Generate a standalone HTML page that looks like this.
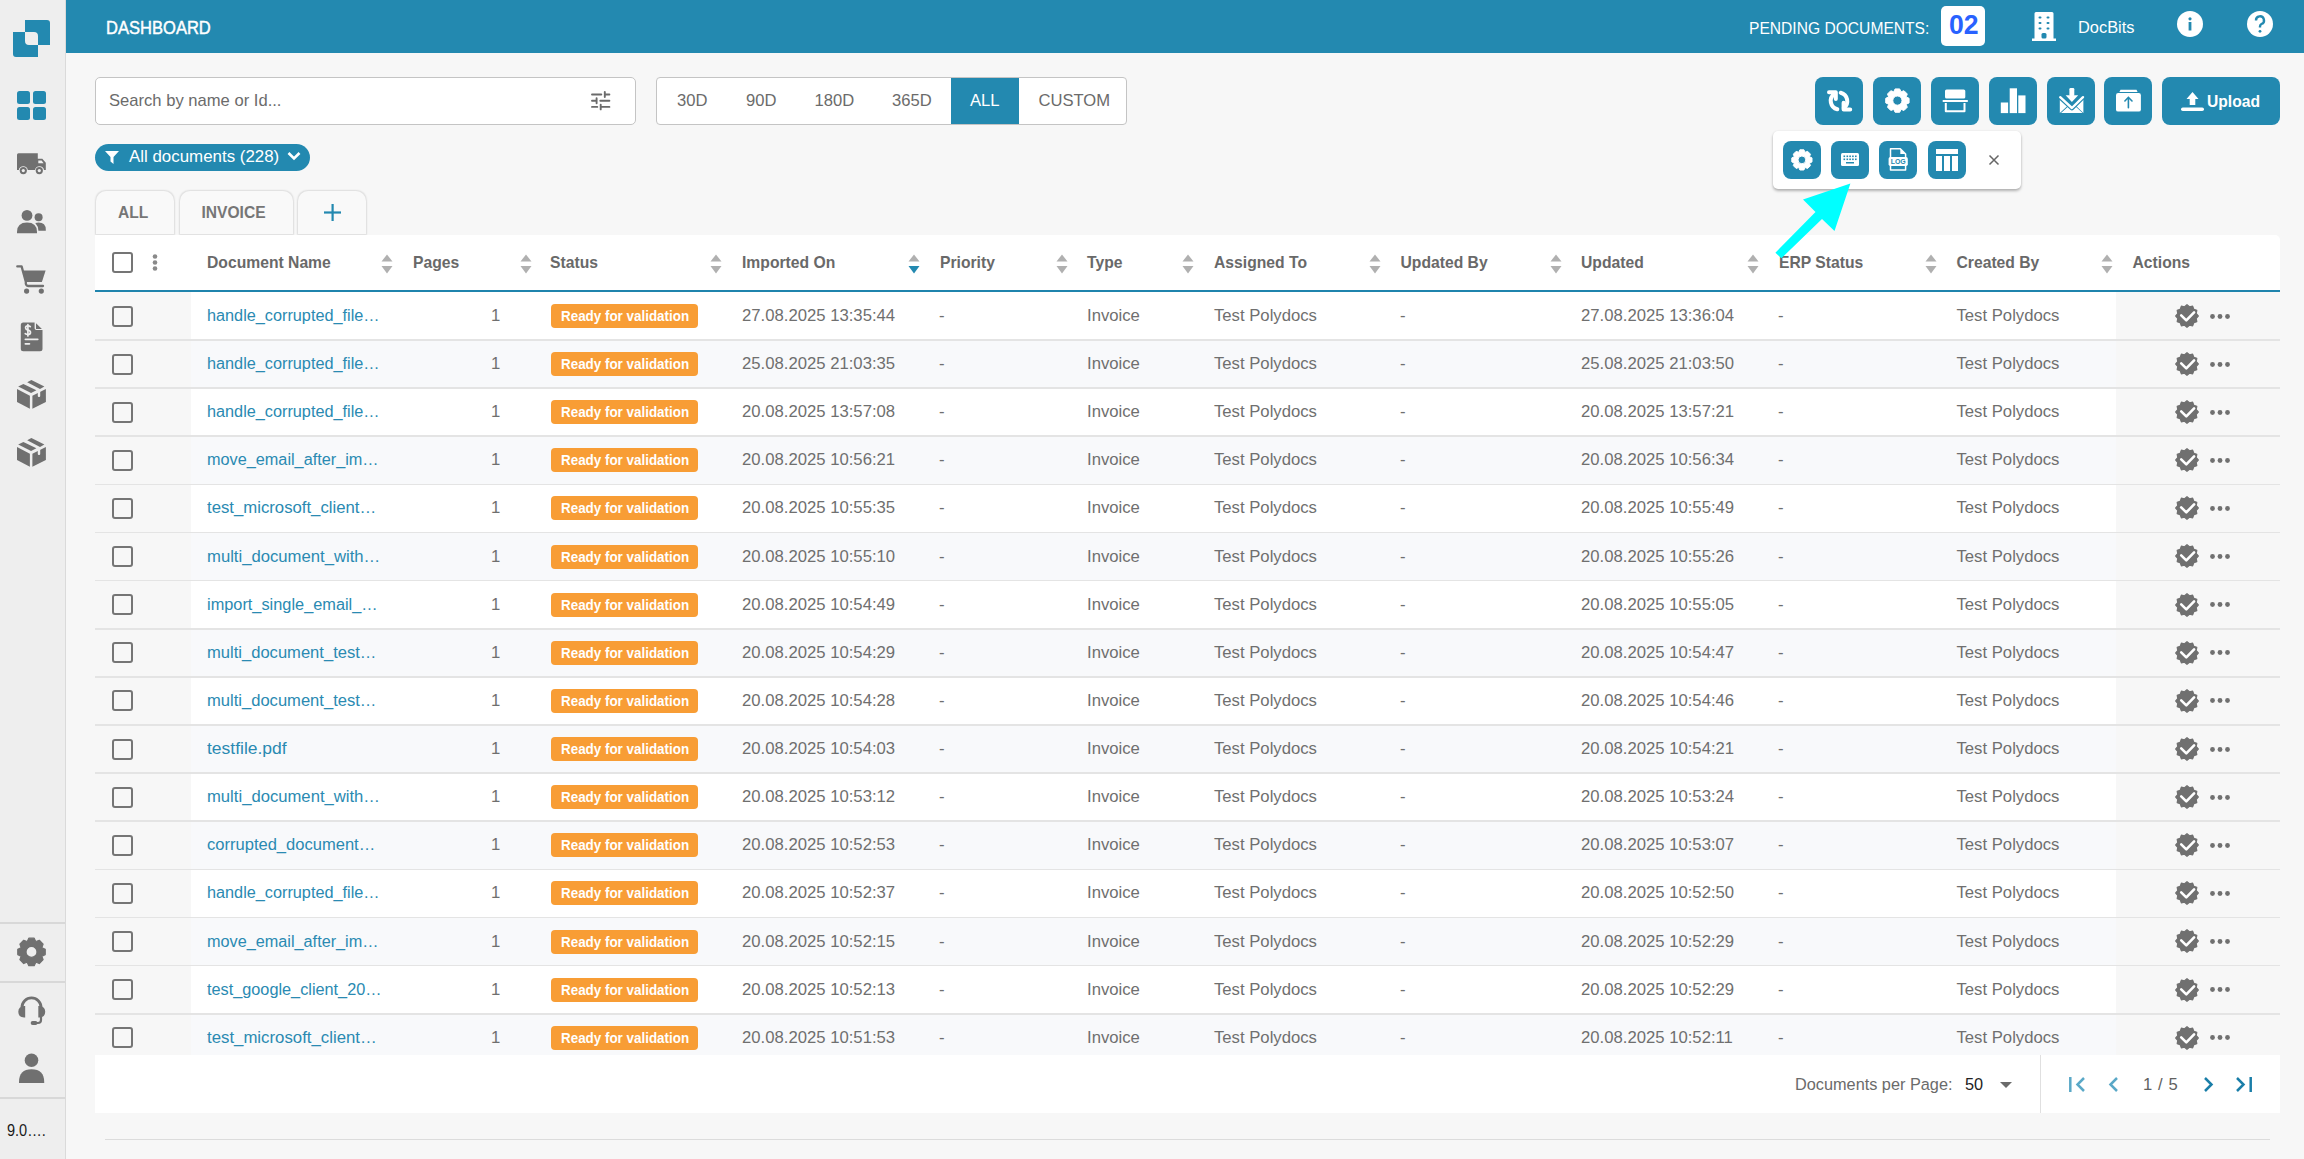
<!DOCTYPE html><html><head><meta charset="utf-8"><style>
*{box-sizing:border-box;margin:0;padding:0}
html,body{width:2304px;height:1159px;overflow:hidden;background:#f7f7f7;font-family:"Liberation Sans",sans-serif;color:#6f6f6f}
.a{position:absolute;white-space:nowrap}
.ic{position:absolute;display:block;overflow:visible}
#side{position:absolute;left:0;top:0;width:66px;height:1159px;background:#eeeeee;border-right:1px solid #dadada}
#hdr{position:absolute;left:66px;top:0;width:2238px;height:53px;background:#2389b0}
.btn{position:absolute;background:#2389b0;border-radius:8px}
.card{position:absolute;left:95px;top:235px;width:2185px;height:878px;background:#fff;border-radius:0 5px 0 0}
.th{position:absolute;top:249px;height:28px;line-height:28px;font-weight:bold;font-size:15.7px;color:#696969}

.cell{position:absolute;top:0;height:47px;line-height:47px;font-size:16.7px;color:#6f6f6f}
.cb{position:absolute;width:21px;height:21px;border:2px solid #757575;border-radius:3px;background:transparent}
</style></head><body>
<div id="side"></div>
<svg class="ic" style="left:12px;top:19px;width:40px;height:40px" viewBox="0 0 40 40"><path fill-rule="evenodd" fill="#2389b0" d="M13 1 H35 Q38 1 38 4 V26 H17 Q13 26 13 22 Z M1 13 H22 Q26 13 26 17 V38 H4 Q1 38 1 35 Z"/></svg>
<svg class="ic" style="left:17px;top:91px;width:29px;height:29px" viewBox="0 0 29 29"><g fill="#2389b0"><rect x="0" y="0" width="13" height="13" rx="2.5"/><rect x="16" y="0" width="13" height="13" rx="2.5"/><rect x="0" y="16" width="13" height="13" rx="2.5"/><rect x="16" y="16" width="13" height="13" rx="2.5"/></g></svg>
<svg class="ic" style="left:0;top:145px;width:66px;height:35px" viewBox="0 145 66 35"><path fill="#707070" d="M18.5 153.3 H37.8 V158.7 H42.3 L45.8 162.8 V169.9 H44 A4.6 4.6 0 0 0 35 169.9 H27.8 A4.6 4.6 0 0 0 18.8 169.9 H17 V154.8 Q17 153.3 18.5 153.3Z"/><path fill="#eee" d="M38.3 160.6 H41.6 L43.6 163.3 H38.3Z"/><circle cx="23.3" cy="170.6" r="3.6" fill="#707070"/><circle cx="23.3" cy="170.6" r="1.6" fill="#eee"/><circle cx="39.3" cy="170.6" r="3.6" fill="#707070"/><circle cx="39.3" cy="170.6" r="1.6" fill="#eee"/></svg>
<svg class="ic" style="left:0;top:205px;width:66px;height:35px" viewBox="0 205 66 35"><g fill="#707070"><circle cx="27" cy="215.4" r="5.4"/><path d="M17 232 Q17 222.5 27 222.5 Q37 222.5 37 232 V233.2 H17Z"/><circle cx="38.6" cy="217.2" r="4"/><path d="M35.3 222.9 Q36.8 222.6 38.6 222.6 Q45.8 222.6 45.8 229.8 V230.8 H38.4 Q38.3 226 35.3 222.9Z"/></g></svg>
<svg class="ic" style="left:0;top:260px;width:66px;height:40px" viewBox="0 260 66 40"><g fill="#707070"><path d="M23.3 270.4 H45.6 L41.9 282 H25.6Z"/><circle cx="26.6" cy="291.1" r="2.6"/><circle cx="41.3" cy="291.1" r="2.6"/></g><path d="M17.3 266.4 H21.6 L25.8 281.8 Q25.4 285.9 28.5 286 H43" stroke="#707070" stroke-width="2.3" fill="none" stroke-linecap="round" stroke-linejoin="round"/></svg>
<svg class="ic" style="left:0;top:318px;width:66px;height:38px" viewBox="0 318 66 38"><path fill="#707070" d="M23.3 322.6 H34.6 V328.2 Q34.6 330 36.4 330 H42.5 V348.7 Q42.5 351.2 40 351.2 H23.3 Q20.8 351.2 20.8 348.7 V325.1 Q20.8 322.6 23.3 322.6Z"/><path fill="#707070" d="M36 323.3 L41.9 329 H36Z"/><g stroke="#eee" fill="none" stroke-width="1.7" stroke-linecap="round"><path d="M30.3 326.6 Q29.5 325.8 27.9 325.8 Q25.4 325.8 25.6 327.9 Q25.8 329.7 28 330.1 Q30.6 330.6 30.5 332.6 Q30.3 334.5 27.9 334.5 Q26.2 334.5 25.3 333.6"/><path d="M27.9 324.7 V335.9"/></g><g fill="#eee"><rect x="24.5" y="338.4" width="14.1" height="1.8" rx="0.9"/><rect x="24.5" y="342.9" width="5.8" height="1.8" rx="0.9"/></g></svg>
<svg class="ic" style="left:0;top:370px;width:66px;height:45px" viewBox="0 370 66 45"><g fill="#707070"><path d="M17 389.1 L29.9 395.8 V408.8 L17 402.1Z"/><path d="M32.4 395.8 L45.9 389.1 V402.1 L32.4 408.8Z"/><path d="M18.2 386.6 L23.4 383.9 L36.4 390.2 L31.1 392.9Z"/><path d="M27.2 382.2 L31.4 380.1 L44.4 386.5 L40 388.9Z"/></g><rect x="37.8" y="389.8" width="2.4" height="7.3" rx="1" fill="#eee"/></svg>
<svg class="ic" style="left:0;top:427.7px;width:66px;height:45px" viewBox="0 370 66 45"><g fill="#707070"><path d="M17 389.1 L29.9 395.8 V408.8 L17 402.1Z"/><path d="M32.4 395.8 L45.9 389.1 V402.1 L32.4 408.8Z"/><path d="M18.2 386.6 L23.4 383.9 L36.4 390.2 L31.1 392.9Z"/><path d="M27.2 382.2 L31.4 380.1 L44.4 386.5 L40 388.9Z"/></g><rect x="37.8" y="389.8" width="2.4" height="7.3" rx="1" fill="#eee"/></svg>
<div class="a" style="left:0;top:922px;width:65px;height:1.5px;background:#d8d8d8"></div>
<div class="a" style="left:0;top:981px;width:65px;height:1.5px;background:#d8d8d8"></div>
<div class="a" style="left:0;top:1097px;width:65px;height:1.5px;background:#d8d8d8"></div>
<svg class="ic" style="left:0;top:0;width:66px;height:1159px" viewBox="0 0 66 1159"><path fill-rule="evenodd" fill="#707070" stroke="#707070" stroke-width="1.2" stroke-linejoin="round" d="M27.30 941.41 L28.80 938.16 L34.20 938.16 L35.70 941.41 L35.95 941.51 L39.30 940.28 L43.12 944.10 L41.89 947.45 L41.99 947.70 L45.24 949.20 L45.24 954.60 L41.99 956.10 L41.89 956.35 L43.12 959.70 L39.30 963.52 L35.95 962.29 L35.70 962.39 L34.20 965.64 L28.80 965.64 L27.30 962.39 L27.05 962.29 L23.70 963.52 L19.88 959.70 L21.11 956.35 L21.01 956.10 L17.76 954.60 L17.76 949.20 L21.01 947.70 L21.11 947.45 L19.88 944.10 L23.70 940.28 L27.05 941.51Z M37.00 951.90 A5.5 5.5 0 1 0 26.00 951.90 A5.5 5.5 0 1 0 37.00 951.90Z"/></svg>
<svg class="ic" style="left:0;top:990px;width:66px;height:40px" viewBox="0 990 66 40"><path d="M21.9 1007.5 A9.6 9.6 0 0 1 41.1 1007.5" stroke="#707070" stroke-width="2.8" fill="none"/><g fill="#707070"><path d="M25.2 1005.9 V1017.6 H24 Q18.3 1017 18.3 1011.7 Q18.3 1006.4 24 1005.9Z"/><path d="M38.3 1005.9 V1017.6 H39.5 Q45.2 1017 45.2 1011.7 Q45.2 1006.4 39.5 1005.9Z"/><rect x="30.7" y="1021" width="6.8" height="3.9" rx="1.95"/></g><path d="M41 1016 V1020 Q41 1023 38 1023 H35" stroke="#707070" stroke-width="2.2" fill="none"/></svg>
<svg class="ic" style="left:0;top:1050px;width:66px;height:40px" viewBox="0 1050 66 40"><g fill="#707070"><circle cx="31.5" cy="1060.3" r="6.8"/><path d="M19 1082 Q19 1069.3 31.5 1069.3 Q44.2 1069.3 44.2 1082 V1083.1 H19Z"/></g></svg>
<div class="a" style="left:7px;top:1120px;font-size:16.5px;line-height:20px;color:#1a1a1a;transform:scaleX(0.88);transform-origin:0 0">9.0….</div>
<div id="hdr"></div>
<div class="a" style="left:105.5px;top:16px;font-size:18.6px;line-height:24px;color:#fff;font-weight:normal;-webkit-text-stroke:0.45px #fff;transform:scaleX(0.89);transform-origin:0 0">DASHBOARD</div>
<div class="a" style="left:1749px;top:17px;font-size:16.8px;line-height:24px;color:#fff;transform:scaleX(0.93);transform-origin:0 0">PENDING DOCUMENTS:</div>
<div class="a" style="left:1941px;top:6px;width:44px;height:40px;background:#fff;border-radius:5px"></div>
<div class="a" style="left:1949px;top:5px;height:40px;line-height:40px;font-size:27.5px;font-weight:bold;color:#2962ff;transform:scaleX(0.966);transform-origin:0 0">02</div>
<svg class="ic" style="left:2032px;top:12px;width:24px;height:29px" viewBox="0 0 24 29"><path fill="#fff" d="M4 0 H20 Q21.5 0 21.5 1.5 V26.5 H24 V29 H0 V26.5 H2.5 V1.5 Q2.5 0 4 0Z"/><g fill="#2389b0"><rect x="6.5" y="4.5" width="3" height="2" rx="1"/><rect x="14.5" y="4.5" width="3" height="2" rx="1"/><rect x="6.5" y="10" width="3" height="2" rx="1"/><rect x="14.5" y="10" width="3" height="2" rx="1"/><rect x="6.5" y="15.5" width="3" height="2" rx="1"/><rect x="14.5" y="15.5" width="3" height="2" rx="1"/><rect x="9.5" y="21" width="5" height="5.5" rx="1.5"/></g></svg>
<div class="a" style="left:2078px;top:15px;font-size:16.4px;line-height:24px;color:#fff">DocBits</div>
<svg class="ic" style="left:2177px;top:11px;width:26px;height:26px" viewBox="0 0 26 26"><circle cx="13" cy="13" r="13" fill="#fff"/><circle cx="13" cy="7.8" r="1.6" fill="#2389b0"/><rect x="11.6" y="11" width="2.8" height="8.5" fill="#2389b0"/></svg>
<svg class="ic" style="left:2246.5px;top:11px;width:26px;height:26px" viewBox="0 0 26 26"><circle cx="13" cy="13" r="13" fill="#fff"/><path d="M9 9.5 A4 4 0 1 1 14.5 13 Q13 13.8 13 15.5 V16.5" stroke="#2389b0" stroke-width="2.4" fill="none"/><circle cx="13" cy="20.3" r="1.4" fill="#2389b0"/></svg>
<div class="a" style="left:95px;top:77px;width:541px;height:48px;background:#fff;border:1.5px solid #c4c4c4;border-radius:5px"></div>
<div class="a" style="left:109px;top:89px;font-size:16.6px;line-height:24px;color:#6b6b6b">Search by name or Id...</div>
<svg class="ic" style="left:580px;top:80px;width:40px;height:40px" viewBox="580 80 40 40"><path d="M592 94.5 H601.3 M604.8 92 V97 M604.8 94.5 H609.4 M592 100.7 H596.6 M596.6 98.3 V103.2 M600.3 100.7 H609.4 M592 106.9 H597.3 M600.7 104.6 V109.4 M600.7 106.9 H609.4" stroke="#6b6b6b" stroke-width="1.9" stroke-linecap="round" fill="none"/></svg>
<div class="a" style="left:656px;top:77px;width:471px;height:48px;background:#fff;border:1.5px solid #c4c4c4;border-radius:4px"></div>
<div class="a" style="left:951px;top:78px;width:68px;height:46px;background:#2389b0"></div>
<div class="a" style="left:677px;top:89px;font-size:16.6px;line-height:24px;color:#6b6b6b">30D</div>
<div class="a" style="left:746px;top:89px;font-size:16.6px;line-height:24px;color:#6b6b6b">90D</div>
<div class="a" style="left:814.5px;top:89px;font-size:16.6px;line-height:24px;color:#6b6b6b">180D</div>
<div class="a" style="left:892px;top:89px;font-size:16.6px;line-height:24px;color:#6b6b6b">365D</div>
<div class="a" style="left:970px;top:89px;font-size:16.6px;line-height:24px;color:#fff">ALL</div>
<div class="a" style="left:1038.5px;top:89px;font-size:16.6px;line-height:24px;color:#6b6b6b">CUSTOM</div>
<div class="a" style="left:95px;top:144px;width:215px;height:27px;background:#2389b0;border-radius:14px"></div>
<svg class="ic" style="left:105px;top:151px;width:14px;height:13px" viewBox="0 0 14 13"><path fill="#fff" d="M0 0 H14 L8.5 6 V13 L5.5 10.5 V6Z"/></svg>
<div class="a" style="left:129px;top:145px;font-size:16.9px;line-height:24px;color:#fff">All documents (228)</div>
<svg class="ic" style="left:287px;top:151px;width:14px;height:10px" viewBox="0 0 14 10"><path d="M1.5 2 L7 7.5 L12.5 2" stroke="#fff" stroke-width="2.6" fill="none"/></svg>
<div class="a" style="left:96px;top:190.5px;width:78px;height:43.5px;background:#f9f9f9;border-radius:10px 10px 0 0;box-shadow:0 0 1.5px 0.5px rgba(0,0,0,0.10)"></div>
<div class="a" style="left:180px;top:190.5px;width:113px;height:43.5px;background:#f9f9f9;border-radius:10px 10px 0 0;box-shadow:0 0 1.5px 0.5px rgba(0,0,0,0.10)"></div>
<div class="a" style="left:298px;top:190.5px;width:68px;height:43.5px;background:#f9f9f9;border-radius:10px 10px 0 0;box-shadow:0 0 1.5px 0.5px rgba(0,0,0,0.10)"></div>
<div class="a" style="left:118px;top:201px;font-size:15.6px;line-height:24px;font-weight:bold;color:#767676">ALL</div>
<div class="a" style="left:201.5px;top:201px;font-size:15.6px;line-height:24px;font-weight:bold;color:#767676">INVOICE</div>
<svg class="ic" style="left:324px;top:204px;width:17px;height:17px" viewBox="0 0 17 17"><g fill="#2389b0"><rect x="7.5" y="0" width="2.2" height="17"/><rect x="0" y="7.4" width="17" height="2.2"/></g></svg>
<div class="btn" style="left:1815px;top:77px;width:48px;height:48px"></div>
<div class="btn" style="left:1873px;top:77px;width:48px;height:48px"></div>
<div class="btn" style="left:1931px;top:77px;width:48px;height:48px"></div>
<div class="btn" style="left:1989px;top:77px;width:48px;height:48px"></div>
<div class="btn" style="left:2046.5px;top:77px;width:48px;height:48px"></div>
<div class="btn" style="left:2104px;top:77px;width:48px;height:48px"></div>
<div class="btn" style="left:2162px;top:77px;width:118px;height:48px"></div>
<svg class="ic" style="left:1815px;top:77px;width:48px;height:48px" viewBox="0 0 48 48"><g stroke="#fff" stroke-width="4" fill="none" stroke-linecap="round" stroke-linejoin="round"><path d="M14 15.2 H20.8 V22"/><path d="M19.2 16.8 A8.8 8.8 0 0 0 22.3 32.3"/><path d="M28.6 25.8 V32.6 H35.2"/><path d="M28.8 31.2 A8.8 8.8 0 0 0 25.7 15.7"/></g></svg>
<svg class="ic" style="left:1873px;top:77px;width:48px;height:48px" viewBox="0 0 48 48"><path fill-rule="evenodd" fill="#fff" stroke="#fff" stroke-width="1" stroke-linejoin="round" d="M20.80 14.70 L22.10 11.92 L26.70 11.92 L28.00 14.70 L28.15 14.76 L31.03 13.72 L34.28 16.97 L33.24 19.85 L33.30 20.00 L36.08 21.30 L36.08 25.90 L33.30 27.20 L33.24 27.35 L34.28 30.23 L31.03 33.48 L28.15 32.44 L28.00 32.50 L26.70 35.28 L22.10 35.28 L20.80 32.50 L20.65 32.44 L17.77 33.48 L14.52 30.23 L15.56 27.35 L15.50 27.20 L12.72 25.90 L12.72 21.30 L15.50 20.00 L15.56 19.85 L14.52 16.97 L17.77 13.72 L20.65 14.76Z M29.00 23.60 A4.6 4.6 0 1 0 19.80 23.60 A4.6 4.6 0 1 0 29.00 23.60Z"/></svg>
<svg class="ic" style="left:1931px;top:77px;width:48px;height:48px" viewBox="0 0 48 48"><g fill="#fff"><rect x="14" y="12.4" width="20.3" height="9.2" rx="1.6"/><rect x="11.7" y="23" width="25.1" height="2"/></g><path d="M14.8 26 V34.2 H33.5 V26" stroke="#fff" stroke-width="2" fill="none" stroke-linejoin="round"/></svg>
<svg class="ic" style="left:1989px;top:77px;width:48px;height:48px" viewBox="0 0 48 48"><g fill="#fff"><rect x="11.8" y="25.5" width="7.3" height="10.6"/><rect x="20.7" y="11.3" width="7.3" height="24.8"/><rect x="29.3" y="18.4" width="7.2" height="17.7"/></g></svg>
<svg class="ic" style="left:2046.5px;top:77px;width:48px;height:48px" viewBox="0 0 48 48"><g fill="#fff"><rect x="22.4" y="11" width="4.9" height="8" rx="1.2"/><path d="M18.6 18.2 H31.2 L24.9 25Z"/><path d="M12.8 21 L21 28.6 L12.8 36Z"/><path d="M36.4 21 L28.6 28.6 L36.4 36Z"/><path d="M14 36 L21.5 29.2 Q24.9 32.6 28.3 29.2 L35.6 36Z"/></g><path d="M13.2 20.2 L24.9 31 L36 20.2" stroke="#2389b0" stroke-width="4.6" fill="none" stroke-linejoin="round"/><path d="M13.2 20.2 L24.9 31 L36 20.2" stroke="#fff" stroke-width="2.4" fill="none" stroke-linejoin="round" stroke-linecap="round"/></svg>
<svg class="ic" style="left:2104px;top:77px;width:48px;height:48px" viewBox="0 0 48 48"><g fill="#fff"><path d="M16.5 12.8 H32.5 L33.6 14.9 H15.4Z"/><rect x="12" y="16.1" width="24.9" height="18.5" rx="2.2"/></g><path d="M24.4 30.8 V20.3 M20.9 24 L24.4 20.3 L28 24" stroke="#2389b0" stroke-width="1.6" fill="none" stroke-linecap="round"/></svg>
<svg class="ic" style="left:2181px;top:92px;width:23px;height:20px" viewBox="0 0 23 20"><g fill="#fff"><path d="M11.5 0 L17.5 7 H14.3 V13 H8.7 V7 H5.5Z"/><rect x="0" y="15.5" width="23" height="3.5" rx="1.75"/></g></svg>
<div class="a" style="left:2207px;top:89.5px;font-size:17px;line-height:24px;font-weight:bold;color:#fff;transform:scaleX(0.92);transform-origin:0 0">Upload</div>
<div class="card"></div>
<div class="cb" style="left:112px;top:252px"></div>
<svg class="ic" style="left:152px;top:254px;width:6px;height:17px" viewBox="0 0 6 17"><g fill="#8a8a8a"><circle cx="3" cy="2.5" r="2.3"/><circle cx="3" cy="8.5" r="2.3"/><circle cx="3" cy="14.5" r="2.3"/></g></svg>
<div class="th" style="left:207px">Document Name</div>
<svg class="ic" style="left:381px;top:254px;width:12px;height:20px" viewBox="0 0 12 20"><path fill="#b0b0b0" d="M0.5 7.5 L6 0.5 L11.5 7.5Z"/><path fill="#b0b0b0" d="M0.5 12 L6 19.5 L11.5 12Z"/></svg>
<div class="th" style="left:413px">Pages</div>
<svg class="ic" style="left:520px;top:254px;width:12px;height:20px" viewBox="0 0 12 20"><path fill="#b0b0b0" d="M0.5 7.5 L6 0.5 L11.5 7.5Z"/><path fill="#b0b0b0" d="M0.5 12 L6 19.5 L11.5 12Z"/></svg>
<div class="th" style="left:550px">Status</div>
<svg class="ic" style="left:710px;top:254px;width:12px;height:20px" viewBox="0 0 12 20"><path fill="#b0b0b0" d="M0.5 7.5 L6 0.5 L11.5 7.5Z"/><path fill="#b0b0b0" d="M0.5 12 L6 19.5 L11.5 12Z"/></svg>
<div class="th" style="left:742px">Imported On</div>
<svg class="ic" style="left:908px;top:254px;width:12px;height:20px" viewBox="0 0 12 20"><path fill="#b0b0b0" d="M0.5 7.5 L6 0.5 L11.5 7.5Z"/><path fill="#2389b0" d="M0.5 12 L6 19.5 L11.5 12Z"/></svg>
<div class="th" style="left:940px">Priority</div>
<svg class="ic" style="left:1055.5px;top:254px;width:12px;height:20px" viewBox="0 0 12 20"><path fill="#b0b0b0" d="M0.5 7.5 L6 0.5 L11.5 7.5Z"/><path fill="#b0b0b0" d="M0.5 12 L6 19.5 L11.5 12Z"/></svg>
<div class="th" style="left:1087px">Type</div>
<svg class="ic" style="left:1182px;top:254px;width:12px;height:20px" viewBox="0 0 12 20"><path fill="#b0b0b0" d="M0.5 7.5 L6 0.5 L11.5 7.5Z"/><path fill="#b0b0b0" d="M0.5 12 L6 19.5 L11.5 12Z"/></svg>
<div class="th" style="left:1214px">Assigned To</div>
<svg class="ic" style="left:1369px;top:254px;width:12px;height:20px" viewBox="0 0 12 20"><path fill="#b0b0b0" d="M0.5 7.5 L6 0.5 L11.5 7.5Z"/><path fill="#b0b0b0" d="M0.5 12 L6 19.5 L11.5 12Z"/></svg>
<div class="th" style="left:1400.5px">Updated By</div>
<svg class="ic" style="left:1549.5px;top:254px;width:12px;height:20px" viewBox="0 0 12 20"><path fill="#b0b0b0" d="M0.5 7.5 L6 0.5 L11.5 7.5Z"/><path fill="#b0b0b0" d="M0.5 12 L6 19.5 L11.5 12Z"/></svg>
<div class="th" style="left:1581px">Updated</div>
<svg class="ic" style="left:1747px;top:254px;width:12px;height:20px" viewBox="0 0 12 20"><path fill="#b0b0b0" d="M0.5 7.5 L6 0.5 L11.5 7.5Z"/><path fill="#b0b0b0" d="M0.5 12 L6 19.5 L11.5 12Z"/></svg>
<div class="th" style="left:1779px">ERP Status</div>
<svg class="ic" style="left:1925px;top:254px;width:12px;height:20px" viewBox="0 0 12 20"><path fill="#b0b0b0" d="M0.5 7.5 L6 0.5 L11.5 7.5Z"/><path fill="#b0b0b0" d="M0.5 12 L6 19.5 L11.5 12Z"/></svg>
<div class="th" style="left:1956.5px">Created By</div>
<svg class="ic" style="left:2101px;top:254px;width:12px;height:20px" viewBox="0 0 12 20"><path fill="#b0b0b0" d="M0.5 7.5 L6 0.5 L11.5 7.5Z"/><path fill="#b0b0b0" d="M0.5 12 L6 19.5 L11.5 12Z"/></svg>
<div class="th" style="left:2132.5px">Actions</div>
<div class="a" style="left:95px;top:290px;width:2185px;height:2.3px;background:#1f84ad"></div>
<div class="a" style="left:95px;top:292px;width:2185px;height:763px;overflow:hidden">
<div style="position:absolute;left:0;top:0.00px;width:2185px;height:48.12px;background:#ffffff">
<div style="position:absolute;left:0;top:0;width:96px;height:100%;background:#f7f7f7"></div>
<div style="position:absolute;left:2021px;top:0;width:164px;height:100%;background:#f7f7f7"></div>
<div class="cb" style="left:17px;top:13.5px"></div>
<div class="cell a" style="left:111.5px;color:#2a8ab2;font-size:16.0px;transform:scaleX(1.0155);transform-origin:0 0">handle_corrupted_file…</div>
<div class="cell a" style="left:396px;color:#6f6f6f;font-size:16.7px;">1</div>
<div class="a" style="left:456px;top:12px;width:147px;height:24px;background:#f89d35;border-radius:4px"></div><div class="a" style="left:465.5px;top:12px;height:24px;color:#fff;font-weight:bold;font-size:14.9px;line-height:24.5px;transform:scaleX(0.9);transform-origin:0 0">Ready for validation</div>
<div class="cell a" style="left:647px;color:#6f6f6f;font-size:16.7px;">27.08.2025 13:35:44</div>
<div class="cell a" style="left:844px;color:#6f6f6f;font-size:16.7px;">-</div>
<div class="cell a" style="left:992px;color:#6f6f6f;font-size:16.7px;">Invoice</div>
<div class="cell a" style="left:1119px;color:#6f6f6f;font-size:16.7px;">Test Polydocs</div>
<div class="cell a" style="left:1305px;color:#6f6f6f;font-size:16.7px;">-</div>
<div class="cell a" style="left:1486px;color:#6f6f6f;font-size:16.7px;">27.08.2025 13:36:04</div>
<div class="cell a" style="left:1683px;color:#6f6f6f;font-size:16.7px;">-</div>
<div class="cell a" style="left:1861.5px;color:#6f6f6f;font-size:16.7px;">Test Polydocs</div>
<svg class="ic" style="left:2080px;top:11.9px;width:24px;height:24px" viewBox="0 0 24 24"><g fill="#707070"><path stroke="#707070" stroke-width="1.2" stroke-linejoin="round" d="M12.00 0.70 L14.48 2.73 L17.65 2.21 L18.79 5.21 L21.79 6.35 L21.27 9.52 L23.30 12.00 L21.27 14.48 L21.79 17.65 L18.79 18.79 L17.65 21.79 L14.48 21.27 L12.00 23.30 L9.52 21.27 L6.35 21.79 L5.21 18.79 L2.21 17.65 L2.73 14.48 L0.70 12.00 L2.73 9.52 L2.21 6.35 L5.21 5.21 L6.35 2.21 L9.52 2.73Z"/><path d="M6.2 11.4 L11.3 16.4 L19.1 8.4" stroke="#fff" stroke-width="2.6" fill="none" stroke-linecap="round" stroke-linejoin="round"/></g></svg>
<svg class="ic" style="left:2115px;top:21.5px;width:20px;height:5px" viewBox="0 0 20 5"><g fill="#707070"><circle cx="2.5" cy="2.5" r="2.4"/><circle cx="10" cy="2.5" r="2.4"/><circle cx="17.5" cy="2.5" r="2.4"/></g></svg>
<div style="position:absolute;left:0;top:47.2px;width:2185px;height:1.7px;background:#e4e4e4;z-index:1"></div>
</div>
<div style="position:absolute;left:0;top:48.12px;width:2185px;height:48.12px;background:#f8f9fb">
<div style="position:absolute;left:0;top:0;width:96px;height:100%;background:#f7f7f7"></div>
<div style="position:absolute;left:2021px;top:0;width:164px;height:100%;background:#f7f7f7"></div>
<div class="cb" style="left:17px;top:13.5px"></div>
<div class="cell a" style="left:111.5px;color:#2a8ab2;font-size:16.0px;transform:scaleX(1.0155);transform-origin:0 0">handle_corrupted_file…</div>
<div class="cell a" style="left:396px;color:#6f6f6f;font-size:16.7px;">1</div>
<div class="a" style="left:456px;top:12px;width:147px;height:24px;background:#f89d35;border-radius:4px"></div><div class="a" style="left:465.5px;top:12px;height:24px;color:#fff;font-weight:bold;font-size:14.9px;line-height:24.5px;transform:scaleX(0.9);transform-origin:0 0">Ready for validation</div>
<div class="cell a" style="left:647px;color:#6f6f6f;font-size:16.7px;">25.08.2025 21:03:35</div>
<div class="cell a" style="left:844px;color:#6f6f6f;font-size:16.7px;">-</div>
<div class="cell a" style="left:992px;color:#6f6f6f;font-size:16.7px;">Invoice</div>
<div class="cell a" style="left:1119px;color:#6f6f6f;font-size:16.7px;">Test Polydocs</div>
<div class="cell a" style="left:1305px;color:#6f6f6f;font-size:16.7px;">-</div>
<div class="cell a" style="left:1486px;color:#6f6f6f;font-size:16.7px;">25.08.2025 21:03:50</div>
<div class="cell a" style="left:1683px;color:#6f6f6f;font-size:16.7px;">-</div>
<div class="cell a" style="left:1861.5px;color:#6f6f6f;font-size:16.7px;">Test Polydocs</div>
<svg class="ic" style="left:2080px;top:11.9px;width:24px;height:24px" viewBox="0 0 24 24"><g fill="#707070"><path stroke="#707070" stroke-width="1.2" stroke-linejoin="round" d="M12.00 0.70 L14.48 2.73 L17.65 2.21 L18.79 5.21 L21.79 6.35 L21.27 9.52 L23.30 12.00 L21.27 14.48 L21.79 17.65 L18.79 18.79 L17.65 21.79 L14.48 21.27 L12.00 23.30 L9.52 21.27 L6.35 21.79 L5.21 18.79 L2.21 17.65 L2.73 14.48 L0.70 12.00 L2.73 9.52 L2.21 6.35 L5.21 5.21 L6.35 2.21 L9.52 2.73Z"/><path d="M6.2 11.4 L11.3 16.4 L19.1 8.4" stroke="#fff" stroke-width="2.6" fill="none" stroke-linecap="round" stroke-linejoin="round"/></g></svg>
<svg class="ic" style="left:2115px;top:21.5px;width:20px;height:5px" viewBox="0 0 20 5"><g fill="#707070"><circle cx="2.5" cy="2.5" r="2.4"/><circle cx="10" cy="2.5" r="2.4"/><circle cx="17.5" cy="2.5" r="2.4"/></g></svg>
<div style="position:absolute;left:0;top:47.2px;width:2185px;height:1.7px;background:#e4e4e4;z-index:1"></div>
</div>
<div style="position:absolute;left:0;top:96.24px;width:2185px;height:48.12px;background:#ffffff">
<div style="position:absolute;left:0;top:0;width:96px;height:100%;background:#f7f7f7"></div>
<div style="position:absolute;left:2021px;top:0;width:164px;height:100%;background:#f7f7f7"></div>
<div class="cb" style="left:17px;top:13.5px"></div>
<div class="cell a" style="left:111.5px;color:#2a8ab2;font-size:16.0px;transform:scaleX(1.0155);transform-origin:0 0">handle_corrupted_file…</div>
<div class="cell a" style="left:396px;color:#6f6f6f;font-size:16.7px;">1</div>
<div class="a" style="left:456px;top:12px;width:147px;height:24px;background:#f89d35;border-radius:4px"></div><div class="a" style="left:465.5px;top:12px;height:24px;color:#fff;font-weight:bold;font-size:14.9px;line-height:24.5px;transform:scaleX(0.9);transform-origin:0 0">Ready for validation</div>
<div class="cell a" style="left:647px;color:#6f6f6f;font-size:16.7px;">20.08.2025 13:57:08</div>
<div class="cell a" style="left:844px;color:#6f6f6f;font-size:16.7px;">-</div>
<div class="cell a" style="left:992px;color:#6f6f6f;font-size:16.7px;">Invoice</div>
<div class="cell a" style="left:1119px;color:#6f6f6f;font-size:16.7px;">Test Polydocs</div>
<div class="cell a" style="left:1305px;color:#6f6f6f;font-size:16.7px;">-</div>
<div class="cell a" style="left:1486px;color:#6f6f6f;font-size:16.7px;">20.08.2025 13:57:21</div>
<div class="cell a" style="left:1683px;color:#6f6f6f;font-size:16.7px;">-</div>
<div class="cell a" style="left:1861.5px;color:#6f6f6f;font-size:16.7px;">Test Polydocs</div>
<svg class="ic" style="left:2080px;top:11.9px;width:24px;height:24px" viewBox="0 0 24 24"><g fill="#707070"><path stroke="#707070" stroke-width="1.2" stroke-linejoin="round" d="M12.00 0.70 L14.48 2.73 L17.65 2.21 L18.79 5.21 L21.79 6.35 L21.27 9.52 L23.30 12.00 L21.27 14.48 L21.79 17.65 L18.79 18.79 L17.65 21.79 L14.48 21.27 L12.00 23.30 L9.52 21.27 L6.35 21.79 L5.21 18.79 L2.21 17.65 L2.73 14.48 L0.70 12.00 L2.73 9.52 L2.21 6.35 L5.21 5.21 L6.35 2.21 L9.52 2.73Z"/><path d="M6.2 11.4 L11.3 16.4 L19.1 8.4" stroke="#fff" stroke-width="2.6" fill="none" stroke-linecap="round" stroke-linejoin="round"/></g></svg>
<svg class="ic" style="left:2115px;top:21.5px;width:20px;height:5px" viewBox="0 0 20 5"><g fill="#707070"><circle cx="2.5" cy="2.5" r="2.4"/><circle cx="10" cy="2.5" r="2.4"/><circle cx="17.5" cy="2.5" r="2.4"/></g></svg>
<div style="position:absolute;left:0;top:47.2px;width:2185px;height:1.7px;background:#e4e4e4;z-index:1"></div>
</div>
<div style="position:absolute;left:0;top:144.36px;width:2185px;height:48.12px;background:#f8f9fb">
<div style="position:absolute;left:0;top:0;width:96px;height:100%;background:#f7f7f7"></div>
<div style="position:absolute;left:2021px;top:0;width:164px;height:100%;background:#f7f7f7"></div>
<div class="cb" style="left:17px;top:13.5px"></div>
<div class="cell a" style="left:111.5px;color:#2a8ab2;font-size:16.0px;transform:scaleX(1.0156);transform-origin:0 0">move_email_after_im…</div>
<div class="cell a" style="left:396px;color:#6f6f6f;font-size:16.7px;">1</div>
<div class="a" style="left:456px;top:12px;width:147px;height:24px;background:#f89d35;border-radius:4px"></div><div class="a" style="left:465.5px;top:12px;height:24px;color:#fff;font-weight:bold;font-size:14.9px;line-height:24.5px;transform:scaleX(0.9);transform-origin:0 0">Ready for validation</div>
<div class="cell a" style="left:647px;color:#6f6f6f;font-size:16.7px;">20.08.2025 10:56:21</div>
<div class="cell a" style="left:844px;color:#6f6f6f;font-size:16.7px;">-</div>
<div class="cell a" style="left:992px;color:#6f6f6f;font-size:16.7px;">Invoice</div>
<div class="cell a" style="left:1119px;color:#6f6f6f;font-size:16.7px;">Test Polydocs</div>
<div class="cell a" style="left:1305px;color:#6f6f6f;font-size:16.7px;">-</div>
<div class="cell a" style="left:1486px;color:#6f6f6f;font-size:16.7px;">20.08.2025 10:56:34</div>
<div class="cell a" style="left:1683px;color:#6f6f6f;font-size:16.7px;">-</div>
<div class="cell a" style="left:1861.5px;color:#6f6f6f;font-size:16.7px;">Test Polydocs</div>
<svg class="ic" style="left:2080px;top:11.9px;width:24px;height:24px" viewBox="0 0 24 24"><g fill="#707070"><path stroke="#707070" stroke-width="1.2" stroke-linejoin="round" d="M12.00 0.70 L14.48 2.73 L17.65 2.21 L18.79 5.21 L21.79 6.35 L21.27 9.52 L23.30 12.00 L21.27 14.48 L21.79 17.65 L18.79 18.79 L17.65 21.79 L14.48 21.27 L12.00 23.30 L9.52 21.27 L6.35 21.79 L5.21 18.79 L2.21 17.65 L2.73 14.48 L0.70 12.00 L2.73 9.52 L2.21 6.35 L5.21 5.21 L6.35 2.21 L9.52 2.73Z"/><path d="M6.2 11.4 L11.3 16.4 L19.1 8.4" stroke="#fff" stroke-width="2.6" fill="none" stroke-linecap="round" stroke-linejoin="round"/></g></svg>
<svg class="ic" style="left:2115px;top:21.5px;width:20px;height:5px" viewBox="0 0 20 5"><g fill="#707070"><circle cx="2.5" cy="2.5" r="2.4"/><circle cx="10" cy="2.5" r="2.4"/><circle cx="17.5" cy="2.5" r="2.4"/></g></svg>
<div style="position:absolute;left:0;top:47.2px;width:2185px;height:1.7px;background:#e4e4e4;z-index:1"></div>
</div>
<div style="position:absolute;left:0;top:192.48px;width:2185px;height:48.12px;background:#ffffff">
<div style="position:absolute;left:0;top:0;width:96px;height:100%;background:#f7f7f7"></div>
<div style="position:absolute;left:2021px;top:0;width:164px;height:100%;background:#f7f7f7"></div>
<div class="cb" style="left:17px;top:13.5px"></div>
<div class="cell a" style="left:111.5px;color:#2a8ab2;font-size:16.0px;transform:scaleX(1.0451);transform-origin:0 0">test_microsoft_client…</div>
<div class="cell a" style="left:396px;color:#6f6f6f;font-size:16.7px;">1</div>
<div class="a" style="left:456px;top:12px;width:147px;height:24px;background:#f89d35;border-radius:4px"></div><div class="a" style="left:465.5px;top:12px;height:24px;color:#fff;font-weight:bold;font-size:14.9px;line-height:24.5px;transform:scaleX(0.9);transform-origin:0 0">Ready for validation</div>
<div class="cell a" style="left:647px;color:#6f6f6f;font-size:16.7px;">20.08.2025 10:55:35</div>
<div class="cell a" style="left:844px;color:#6f6f6f;font-size:16.7px;">-</div>
<div class="cell a" style="left:992px;color:#6f6f6f;font-size:16.7px;">Invoice</div>
<div class="cell a" style="left:1119px;color:#6f6f6f;font-size:16.7px;">Test Polydocs</div>
<div class="cell a" style="left:1305px;color:#6f6f6f;font-size:16.7px;">-</div>
<div class="cell a" style="left:1486px;color:#6f6f6f;font-size:16.7px;">20.08.2025 10:55:49</div>
<div class="cell a" style="left:1683px;color:#6f6f6f;font-size:16.7px;">-</div>
<div class="cell a" style="left:1861.5px;color:#6f6f6f;font-size:16.7px;">Test Polydocs</div>
<svg class="ic" style="left:2080px;top:11.9px;width:24px;height:24px" viewBox="0 0 24 24"><g fill="#707070"><path stroke="#707070" stroke-width="1.2" stroke-linejoin="round" d="M12.00 0.70 L14.48 2.73 L17.65 2.21 L18.79 5.21 L21.79 6.35 L21.27 9.52 L23.30 12.00 L21.27 14.48 L21.79 17.65 L18.79 18.79 L17.65 21.79 L14.48 21.27 L12.00 23.30 L9.52 21.27 L6.35 21.79 L5.21 18.79 L2.21 17.65 L2.73 14.48 L0.70 12.00 L2.73 9.52 L2.21 6.35 L5.21 5.21 L6.35 2.21 L9.52 2.73Z"/><path d="M6.2 11.4 L11.3 16.4 L19.1 8.4" stroke="#fff" stroke-width="2.6" fill="none" stroke-linecap="round" stroke-linejoin="round"/></g></svg>
<svg class="ic" style="left:2115px;top:21.5px;width:20px;height:5px" viewBox="0 0 20 5"><g fill="#707070"><circle cx="2.5" cy="2.5" r="2.4"/><circle cx="10" cy="2.5" r="2.4"/><circle cx="17.5" cy="2.5" r="2.4"/></g></svg>
<div style="position:absolute;left:0;top:47.2px;width:2185px;height:1.7px;background:#e4e4e4;z-index:1"></div>
</div>
<div style="position:absolute;left:0;top:240.60px;width:2185px;height:48.12px;background:#f8f9fb">
<div style="position:absolute;left:0;top:0;width:96px;height:100%;background:#f7f7f7"></div>
<div style="position:absolute;left:2021px;top:0;width:164px;height:100%;background:#f7f7f7"></div>
<div class="cb" style="left:17px;top:13.5px"></div>
<div class="cell a" style="left:111.5px;color:#2a8ab2;font-size:16.0px;transform:scaleX(1.0416);transform-origin:0 0">multi_document_with…</div>
<div class="cell a" style="left:396px;color:#6f6f6f;font-size:16.7px;">1</div>
<div class="a" style="left:456px;top:12px;width:147px;height:24px;background:#f89d35;border-radius:4px"></div><div class="a" style="left:465.5px;top:12px;height:24px;color:#fff;font-weight:bold;font-size:14.9px;line-height:24.5px;transform:scaleX(0.9);transform-origin:0 0">Ready for validation</div>
<div class="cell a" style="left:647px;color:#6f6f6f;font-size:16.7px;">20.08.2025 10:55:10</div>
<div class="cell a" style="left:844px;color:#6f6f6f;font-size:16.7px;">-</div>
<div class="cell a" style="left:992px;color:#6f6f6f;font-size:16.7px;">Invoice</div>
<div class="cell a" style="left:1119px;color:#6f6f6f;font-size:16.7px;">Test Polydocs</div>
<div class="cell a" style="left:1305px;color:#6f6f6f;font-size:16.7px;">-</div>
<div class="cell a" style="left:1486px;color:#6f6f6f;font-size:16.7px;">20.08.2025 10:55:26</div>
<div class="cell a" style="left:1683px;color:#6f6f6f;font-size:16.7px;">-</div>
<div class="cell a" style="left:1861.5px;color:#6f6f6f;font-size:16.7px;">Test Polydocs</div>
<svg class="ic" style="left:2080px;top:11.9px;width:24px;height:24px" viewBox="0 0 24 24"><g fill="#707070"><path stroke="#707070" stroke-width="1.2" stroke-linejoin="round" d="M12.00 0.70 L14.48 2.73 L17.65 2.21 L18.79 5.21 L21.79 6.35 L21.27 9.52 L23.30 12.00 L21.27 14.48 L21.79 17.65 L18.79 18.79 L17.65 21.79 L14.48 21.27 L12.00 23.30 L9.52 21.27 L6.35 21.79 L5.21 18.79 L2.21 17.65 L2.73 14.48 L0.70 12.00 L2.73 9.52 L2.21 6.35 L5.21 5.21 L6.35 2.21 L9.52 2.73Z"/><path d="M6.2 11.4 L11.3 16.4 L19.1 8.4" stroke="#fff" stroke-width="2.6" fill="none" stroke-linecap="round" stroke-linejoin="round"/></g></svg>
<svg class="ic" style="left:2115px;top:21.5px;width:20px;height:5px" viewBox="0 0 20 5"><g fill="#707070"><circle cx="2.5" cy="2.5" r="2.4"/><circle cx="10" cy="2.5" r="2.4"/><circle cx="17.5" cy="2.5" r="2.4"/></g></svg>
<div style="position:absolute;left:0;top:47.2px;width:2185px;height:1.7px;background:#e4e4e4;z-index:1"></div>
</div>
<div style="position:absolute;left:0;top:288.72px;width:2185px;height:48.12px;background:#ffffff">
<div style="position:absolute;left:0;top:0;width:96px;height:100%;background:#f7f7f7"></div>
<div style="position:absolute;left:2021px;top:0;width:164px;height:100%;background:#f7f7f7"></div>
<div class="cb" style="left:17px;top:13.5px"></div>
<div class="cell a" style="left:111.5px;color:#2a8ab2;font-size:16.0px;transform:scaleX(1.0207);transform-origin:0 0">import_single_email_…</div>
<div class="cell a" style="left:396px;color:#6f6f6f;font-size:16.7px;">1</div>
<div class="a" style="left:456px;top:12px;width:147px;height:24px;background:#f89d35;border-radius:4px"></div><div class="a" style="left:465.5px;top:12px;height:24px;color:#fff;font-weight:bold;font-size:14.9px;line-height:24.5px;transform:scaleX(0.9);transform-origin:0 0">Ready for validation</div>
<div class="cell a" style="left:647px;color:#6f6f6f;font-size:16.7px;">20.08.2025 10:54:49</div>
<div class="cell a" style="left:844px;color:#6f6f6f;font-size:16.7px;">-</div>
<div class="cell a" style="left:992px;color:#6f6f6f;font-size:16.7px;">Invoice</div>
<div class="cell a" style="left:1119px;color:#6f6f6f;font-size:16.7px;">Test Polydocs</div>
<div class="cell a" style="left:1305px;color:#6f6f6f;font-size:16.7px;">-</div>
<div class="cell a" style="left:1486px;color:#6f6f6f;font-size:16.7px;">20.08.2025 10:55:05</div>
<div class="cell a" style="left:1683px;color:#6f6f6f;font-size:16.7px;">-</div>
<div class="cell a" style="left:1861.5px;color:#6f6f6f;font-size:16.7px;">Test Polydocs</div>
<svg class="ic" style="left:2080px;top:11.9px;width:24px;height:24px" viewBox="0 0 24 24"><g fill="#707070"><path stroke="#707070" stroke-width="1.2" stroke-linejoin="round" d="M12.00 0.70 L14.48 2.73 L17.65 2.21 L18.79 5.21 L21.79 6.35 L21.27 9.52 L23.30 12.00 L21.27 14.48 L21.79 17.65 L18.79 18.79 L17.65 21.79 L14.48 21.27 L12.00 23.30 L9.52 21.27 L6.35 21.79 L5.21 18.79 L2.21 17.65 L2.73 14.48 L0.70 12.00 L2.73 9.52 L2.21 6.35 L5.21 5.21 L6.35 2.21 L9.52 2.73Z"/><path d="M6.2 11.4 L11.3 16.4 L19.1 8.4" stroke="#fff" stroke-width="2.6" fill="none" stroke-linecap="round" stroke-linejoin="round"/></g></svg>
<svg class="ic" style="left:2115px;top:21.5px;width:20px;height:5px" viewBox="0 0 20 5"><g fill="#707070"><circle cx="2.5" cy="2.5" r="2.4"/><circle cx="10" cy="2.5" r="2.4"/><circle cx="17.5" cy="2.5" r="2.4"/></g></svg>
<div style="position:absolute;left:0;top:47.2px;width:2185px;height:1.7px;background:#e4e4e4;z-index:1"></div>
</div>
<div style="position:absolute;left:0;top:336.84px;width:2185px;height:48.12px;background:#f8f9fb">
<div style="position:absolute;left:0;top:0;width:96px;height:100%;background:#f7f7f7"></div>
<div style="position:absolute;left:2021px;top:0;width:164px;height:100%;background:#f7f7f7"></div>
<div class="cb" style="left:17px;top:13.5px"></div>
<div class="cell a" style="left:111.5px;color:#2a8ab2;font-size:16.0px;transform:scaleX(1.0353);transform-origin:0 0">multi_document_test…</div>
<div class="cell a" style="left:396px;color:#6f6f6f;font-size:16.7px;">1</div>
<div class="a" style="left:456px;top:12px;width:147px;height:24px;background:#f89d35;border-radius:4px"></div><div class="a" style="left:465.5px;top:12px;height:24px;color:#fff;font-weight:bold;font-size:14.9px;line-height:24.5px;transform:scaleX(0.9);transform-origin:0 0">Ready for validation</div>
<div class="cell a" style="left:647px;color:#6f6f6f;font-size:16.7px;">20.08.2025 10:54:29</div>
<div class="cell a" style="left:844px;color:#6f6f6f;font-size:16.7px;">-</div>
<div class="cell a" style="left:992px;color:#6f6f6f;font-size:16.7px;">Invoice</div>
<div class="cell a" style="left:1119px;color:#6f6f6f;font-size:16.7px;">Test Polydocs</div>
<div class="cell a" style="left:1305px;color:#6f6f6f;font-size:16.7px;">-</div>
<div class="cell a" style="left:1486px;color:#6f6f6f;font-size:16.7px;">20.08.2025 10:54:47</div>
<div class="cell a" style="left:1683px;color:#6f6f6f;font-size:16.7px;">-</div>
<div class="cell a" style="left:1861.5px;color:#6f6f6f;font-size:16.7px;">Test Polydocs</div>
<svg class="ic" style="left:2080px;top:11.9px;width:24px;height:24px" viewBox="0 0 24 24"><g fill="#707070"><path stroke="#707070" stroke-width="1.2" stroke-linejoin="round" d="M12.00 0.70 L14.48 2.73 L17.65 2.21 L18.79 5.21 L21.79 6.35 L21.27 9.52 L23.30 12.00 L21.27 14.48 L21.79 17.65 L18.79 18.79 L17.65 21.79 L14.48 21.27 L12.00 23.30 L9.52 21.27 L6.35 21.79 L5.21 18.79 L2.21 17.65 L2.73 14.48 L0.70 12.00 L2.73 9.52 L2.21 6.35 L5.21 5.21 L6.35 2.21 L9.52 2.73Z"/><path d="M6.2 11.4 L11.3 16.4 L19.1 8.4" stroke="#fff" stroke-width="2.6" fill="none" stroke-linecap="round" stroke-linejoin="round"/></g></svg>
<svg class="ic" style="left:2115px;top:21.5px;width:20px;height:5px" viewBox="0 0 20 5"><g fill="#707070"><circle cx="2.5" cy="2.5" r="2.4"/><circle cx="10" cy="2.5" r="2.4"/><circle cx="17.5" cy="2.5" r="2.4"/></g></svg>
<div style="position:absolute;left:0;top:47.2px;width:2185px;height:1.7px;background:#e4e4e4;z-index:1"></div>
</div>
<div style="position:absolute;left:0;top:384.96px;width:2185px;height:48.12px;background:#ffffff">
<div style="position:absolute;left:0;top:0;width:96px;height:100%;background:#f7f7f7"></div>
<div style="position:absolute;left:2021px;top:0;width:164px;height:100%;background:#f7f7f7"></div>
<div class="cb" style="left:17px;top:13.5px"></div>
<div class="cell a" style="left:111.5px;color:#2a8ab2;font-size:16.0px;transform:scaleX(1.0353);transform-origin:0 0">multi_document_test…</div>
<div class="cell a" style="left:396px;color:#6f6f6f;font-size:16.7px;">1</div>
<div class="a" style="left:456px;top:12px;width:147px;height:24px;background:#f89d35;border-radius:4px"></div><div class="a" style="left:465.5px;top:12px;height:24px;color:#fff;font-weight:bold;font-size:14.9px;line-height:24.5px;transform:scaleX(0.9);transform-origin:0 0">Ready for validation</div>
<div class="cell a" style="left:647px;color:#6f6f6f;font-size:16.7px;">20.08.2025 10:54:28</div>
<div class="cell a" style="left:844px;color:#6f6f6f;font-size:16.7px;">-</div>
<div class="cell a" style="left:992px;color:#6f6f6f;font-size:16.7px;">Invoice</div>
<div class="cell a" style="left:1119px;color:#6f6f6f;font-size:16.7px;">Test Polydocs</div>
<div class="cell a" style="left:1305px;color:#6f6f6f;font-size:16.7px;">-</div>
<div class="cell a" style="left:1486px;color:#6f6f6f;font-size:16.7px;">20.08.2025 10:54:46</div>
<div class="cell a" style="left:1683px;color:#6f6f6f;font-size:16.7px;">-</div>
<div class="cell a" style="left:1861.5px;color:#6f6f6f;font-size:16.7px;">Test Polydocs</div>
<svg class="ic" style="left:2080px;top:11.9px;width:24px;height:24px" viewBox="0 0 24 24"><g fill="#707070"><path stroke="#707070" stroke-width="1.2" stroke-linejoin="round" d="M12.00 0.70 L14.48 2.73 L17.65 2.21 L18.79 5.21 L21.79 6.35 L21.27 9.52 L23.30 12.00 L21.27 14.48 L21.79 17.65 L18.79 18.79 L17.65 21.79 L14.48 21.27 L12.00 23.30 L9.52 21.27 L6.35 21.79 L5.21 18.79 L2.21 17.65 L2.73 14.48 L0.70 12.00 L2.73 9.52 L2.21 6.35 L5.21 5.21 L6.35 2.21 L9.52 2.73Z"/><path d="M6.2 11.4 L11.3 16.4 L19.1 8.4" stroke="#fff" stroke-width="2.6" fill="none" stroke-linecap="round" stroke-linejoin="round"/></g></svg>
<svg class="ic" style="left:2115px;top:21.5px;width:20px;height:5px" viewBox="0 0 20 5"><g fill="#707070"><circle cx="2.5" cy="2.5" r="2.4"/><circle cx="10" cy="2.5" r="2.4"/><circle cx="17.5" cy="2.5" r="2.4"/></g></svg>
<div style="position:absolute;left:0;top:47.2px;width:2185px;height:1.7px;background:#e4e4e4;z-index:1"></div>
</div>
<div style="position:absolute;left:0;top:433.08px;width:2185px;height:48.12px;background:#f8f9fb">
<div style="position:absolute;left:0;top:0;width:96px;height:100%;background:#f7f7f7"></div>
<div style="position:absolute;left:2021px;top:0;width:164px;height:100%;background:#f7f7f7"></div>
<div class="cb" style="left:17px;top:13.5px"></div>
<div class="cell a" style="left:111.5px;color:#2a8ab2;font-size:16.0px;transform:scaleX(1.0924);transform-origin:0 0">testfile.pdf</div>
<div class="cell a" style="left:396px;color:#6f6f6f;font-size:16.7px;">1</div>
<div class="a" style="left:456px;top:12px;width:147px;height:24px;background:#f89d35;border-radius:4px"></div><div class="a" style="left:465.5px;top:12px;height:24px;color:#fff;font-weight:bold;font-size:14.9px;line-height:24.5px;transform:scaleX(0.9);transform-origin:0 0">Ready for validation</div>
<div class="cell a" style="left:647px;color:#6f6f6f;font-size:16.7px;">20.08.2025 10:54:03</div>
<div class="cell a" style="left:844px;color:#6f6f6f;font-size:16.7px;">-</div>
<div class="cell a" style="left:992px;color:#6f6f6f;font-size:16.7px;">Invoice</div>
<div class="cell a" style="left:1119px;color:#6f6f6f;font-size:16.7px;">Test Polydocs</div>
<div class="cell a" style="left:1305px;color:#6f6f6f;font-size:16.7px;">-</div>
<div class="cell a" style="left:1486px;color:#6f6f6f;font-size:16.7px;">20.08.2025 10:54:21</div>
<div class="cell a" style="left:1683px;color:#6f6f6f;font-size:16.7px;">-</div>
<div class="cell a" style="left:1861.5px;color:#6f6f6f;font-size:16.7px;">Test Polydocs</div>
<svg class="ic" style="left:2080px;top:11.9px;width:24px;height:24px" viewBox="0 0 24 24"><g fill="#707070"><path stroke="#707070" stroke-width="1.2" stroke-linejoin="round" d="M12.00 0.70 L14.48 2.73 L17.65 2.21 L18.79 5.21 L21.79 6.35 L21.27 9.52 L23.30 12.00 L21.27 14.48 L21.79 17.65 L18.79 18.79 L17.65 21.79 L14.48 21.27 L12.00 23.30 L9.52 21.27 L6.35 21.79 L5.21 18.79 L2.21 17.65 L2.73 14.48 L0.70 12.00 L2.73 9.52 L2.21 6.35 L5.21 5.21 L6.35 2.21 L9.52 2.73Z"/><path d="M6.2 11.4 L11.3 16.4 L19.1 8.4" stroke="#fff" stroke-width="2.6" fill="none" stroke-linecap="round" stroke-linejoin="round"/></g></svg>
<svg class="ic" style="left:2115px;top:21.5px;width:20px;height:5px" viewBox="0 0 20 5"><g fill="#707070"><circle cx="2.5" cy="2.5" r="2.4"/><circle cx="10" cy="2.5" r="2.4"/><circle cx="17.5" cy="2.5" r="2.4"/></g></svg>
<div style="position:absolute;left:0;top:47.2px;width:2185px;height:1.7px;background:#e4e4e4;z-index:1"></div>
</div>
<div style="position:absolute;left:0;top:481.20px;width:2185px;height:48.12px;background:#ffffff">
<div style="position:absolute;left:0;top:0;width:96px;height:100%;background:#f7f7f7"></div>
<div style="position:absolute;left:2021px;top:0;width:164px;height:100%;background:#f7f7f7"></div>
<div class="cb" style="left:17px;top:13.5px"></div>
<div class="cell a" style="left:111.5px;color:#2a8ab2;font-size:16.0px;transform:scaleX(1.0404);transform-origin:0 0">multi_document_with…</div>
<div class="cell a" style="left:396px;color:#6f6f6f;font-size:16.7px;">1</div>
<div class="a" style="left:456px;top:12px;width:147px;height:24px;background:#f89d35;border-radius:4px"></div><div class="a" style="left:465.5px;top:12px;height:24px;color:#fff;font-weight:bold;font-size:14.9px;line-height:24.5px;transform:scaleX(0.9);transform-origin:0 0">Ready for validation</div>
<div class="cell a" style="left:647px;color:#6f6f6f;font-size:16.7px;">20.08.2025 10:53:12</div>
<div class="cell a" style="left:844px;color:#6f6f6f;font-size:16.7px;">-</div>
<div class="cell a" style="left:992px;color:#6f6f6f;font-size:16.7px;">Invoice</div>
<div class="cell a" style="left:1119px;color:#6f6f6f;font-size:16.7px;">Test Polydocs</div>
<div class="cell a" style="left:1305px;color:#6f6f6f;font-size:16.7px;">-</div>
<div class="cell a" style="left:1486px;color:#6f6f6f;font-size:16.7px;">20.08.2025 10:53:24</div>
<div class="cell a" style="left:1683px;color:#6f6f6f;font-size:16.7px;">-</div>
<div class="cell a" style="left:1861.5px;color:#6f6f6f;font-size:16.7px;">Test Polydocs</div>
<svg class="ic" style="left:2080px;top:11.9px;width:24px;height:24px" viewBox="0 0 24 24"><g fill="#707070"><path stroke="#707070" stroke-width="1.2" stroke-linejoin="round" d="M12.00 0.70 L14.48 2.73 L17.65 2.21 L18.79 5.21 L21.79 6.35 L21.27 9.52 L23.30 12.00 L21.27 14.48 L21.79 17.65 L18.79 18.79 L17.65 21.79 L14.48 21.27 L12.00 23.30 L9.52 21.27 L6.35 21.79 L5.21 18.79 L2.21 17.65 L2.73 14.48 L0.70 12.00 L2.73 9.52 L2.21 6.35 L5.21 5.21 L6.35 2.21 L9.52 2.73Z"/><path d="M6.2 11.4 L11.3 16.4 L19.1 8.4" stroke="#fff" stroke-width="2.6" fill="none" stroke-linecap="round" stroke-linejoin="round"/></g></svg>
<svg class="ic" style="left:2115px;top:21.5px;width:20px;height:5px" viewBox="0 0 20 5"><g fill="#707070"><circle cx="2.5" cy="2.5" r="2.4"/><circle cx="10" cy="2.5" r="2.4"/><circle cx="17.5" cy="2.5" r="2.4"/></g></svg>
<div style="position:absolute;left:0;top:47.2px;width:2185px;height:1.7px;background:#e4e4e4;z-index:1"></div>
</div>
<div style="position:absolute;left:0;top:529.32px;width:2185px;height:48.12px;background:#f8f9fb">
<div style="position:absolute;left:0;top:0;width:96px;height:100%;background:#f7f7f7"></div>
<div style="position:absolute;left:2021px;top:0;width:164px;height:100%;background:#f7f7f7"></div>
<div class="cb" style="left:17px;top:13.5px"></div>
<div class="cell a" style="left:111.5px;color:#2a8ab2;font-size:16.0px;transform:scaleX(1.0336);transform-origin:0 0">corrupted_document…</div>
<div class="cell a" style="left:396px;color:#6f6f6f;font-size:16.7px;">1</div>
<div class="a" style="left:456px;top:12px;width:147px;height:24px;background:#f89d35;border-radius:4px"></div><div class="a" style="left:465.5px;top:12px;height:24px;color:#fff;font-weight:bold;font-size:14.9px;line-height:24.5px;transform:scaleX(0.9);transform-origin:0 0">Ready for validation</div>
<div class="cell a" style="left:647px;color:#6f6f6f;font-size:16.7px;">20.08.2025 10:52:53</div>
<div class="cell a" style="left:844px;color:#6f6f6f;font-size:16.7px;">-</div>
<div class="cell a" style="left:992px;color:#6f6f6f;font-size:16.7px;">Invoice</div>
<div class="cell a" style="left:1119px;color:#6f6f6f;font-size:16.7px;">Test Polydocs</div>
<div class="cell a" style="left:1305px;color:#6f6f6f;font-size:16.7px;">-</div>
<div class="cell a" style="left:1486px;color:#6f6f6f;font-size:16.7px;">20.08.2025 10:53:07</div>
<div class="cell a" style="left:1683px;color:#6f6f6f;font-size:16.7px;">-</div>
<div class="cell a" style="left:1861.5px;color:#6f6f6f;font-size:16.7px;">Test Polydocs</div>
<svg class="ic" style="left:2080px;top:11.9px;width:24px;height:24px" viewBox="0 0 24 24"><g fill="#707070"><path stroke="#707070" stroke-width="1.2" stroke-linejoin="round" d="M12.00 0.70 L14.48 2.73 L17.65 2.21 L18.79 5.21 L21.79 6.35 L21.27 9.52 L23.30 12.00 L21.27 14.48 L21.79 17.65 L18.79 18.79 L17.65 21.79 L14.48 21.27 L12.00 23.30 L9.52 21.27 L6.35 21.79 L5.21 18.79 L2.21 17.65 L2.73 14.48 L0.70 12.00 L2.73 9.52 L2.21 6.35 L5.21 5.21 L6.35 2.21 L9.52 2.73Z"/><path d="M6.2 11.4 L11.3 16.4 L19.1 8.4" stroke="#fff" stroke-width="2.6" fill="none" stroke-linecap="round" stroke-linejoin="round"/></g></svg>
<svg class="ic" style="left:2115px;top:21.5px;width:20px;height:5px" viewBox="0 0 20 5"><g fill="#707070"><circle cx="2.5" cy="2.5" r="2.4"/><circle cx="10" cy="2.5" r="2.4"/><circle cx="17.5" cy="2.5" r="2.4"/></g></svg>
<div style="position:absolute;left:0;top:47.2px;width:2185px;height:1.7px;background:#e4e4e4;z-index:1"></div>
</div>
<div style="position:absolute;left:0;top:577.44px;width:2185px;height:48.12px;background:#ffffff">
<div style="position:absolute;left:0;top:0;width:96px;height:100%;background:#f7f7f7"></div>
<div style="position:absolute;left:2021px;top:0;width:164px;height:100%;background:#f7f7f7"></div>
<div class="cb" style="left:17px;top:13.5px"></div>
<div class="cell a" style="left:111.5px;color:#2a8ab2;font-size:16.0px;transform:scaleX(1.0155);transform-origin:0 0">handle_corrupted_file…</div>
<div class="cell a" style="left:396px;color:#6f6f6f;font-size:16.7px;">1</div>
<div class="a" style="left:456px;top:12px;width:147px;height:24px;background:#f89d35;border-radius:4px"></div><div class="a" style="left:465.5px;top:12px;height:24px;color:#fff;font-weight:bold;font-size:14.9px;line-height:24.5px;transform:scaleX(0.9);transform-origin:0 0">Ready for validation</div>
<div class="cell a" style="left:647px;color:#6f6f6f;font-size:16.7px;">20.08.2025 10:52:37</div>
<div class="cell a" style="left:844px;color:#6f6f6f;font-size:16.7px;">-</div>
<div class="cell a" style="left:992px;color:#6f6f6f;font-size:16.7px;">Invoice</div>
<div class="cell a" style="left:1119px;color:#6f6f6f;font-size:16.7px;">Test Polydocs</div>
<div class="cell a" style="left:1305px;color:#6f6f6f;font-size:16.7px;">-</div>
<div class="cell a" style="left:1486px;color:#6f6f6f;font-size:16.7px;">20.08.2025 10:52:50</div>
<div class="cell a" style="left:1683px;color:#6f6f6f;font-size:16.7px;">-</div>
<div class="cell a" style="left:1861.5px;color:#6f6f6f;font-size:16.7px;">Test Polydocs</div>
<svg class="ic" style="left:2080px;top:11.9px;width:24px;height:24px" viewBox="0 0 24 24"><g fill="#707070"><path stroke="#707070" stroke-width="1.2" stroke-linejoin="round" d="M12.00 0.70 L14.48 2.73 L17.65 2.21 L18.79 5.21 L21.79 6.35 L21.27 9.52 L23.30 12.00 L21.27 14.48 L21.79 17.65 L18.79 18.79 L17.65 21.79 L14.48 21.27 L12.00 23.30 L9.52 21.27 L6.35 21.79 L5.21 18.79 L2.21 17.65 L2.73 14.48 L0.70 12.00 L2.73 9.52 L2.21 6.35 L5.21 5.21 L6.35 2.21 L9.52 2.73Z"/><path d="M6.2 11.4 L11.3 16.4 L19.1 8.4" stroke="#fff" stroke-width="2.6" fill="none" stroke-linecap="round" stroke-linejoin="round"/></g></svg>
<svg class="ic" style="left:2115px;top:21.5px;width:20px;height:5px" viewBox="0 0 20 5"><g fill="#707070"><circle cx="2.5" cy="2.5" r="2.4"/><circle cx="10" cy="2.5" r="2.4"/><circle cx="17.5" cy="2.5" r="2.4"/></g></svg>
<div style="position:absolute;left:0;top:47.2px;width:2185px;height:1.7px;background:#e4e4e4;z-index:1"></div>
</div>
<div style="position:absolute;left:0;top:625.56px;width:2185px;height:48.12px;background:#f8f9fb">
<div style="position:absolute;left:0;top:0;width:96px;height:100%;background:#f7f7f7"></div>
<div style="position:absolute;left:2021px;top:0;width:164px;height:100%;background:#f7f7f7"></div>
<div class="cb" style="left:17px;top:13.5px"></div>
<div class="cell a" style="left:111.5px;color:#2a8ab2;font-size:16.0px;transform:scaleX(1.015);transform-origin:0 0">move_email_after_im…</div>
<div class="cell a" style="left:396px;color:#6f6f6f;font-size:16.7px;">1</div>
<div class="a" style="left:456px;top:12px;width:147px;height:24px;background:#f89d35;border-radius:4px"></div><div class="a" style="left:465.5px;top:12px;height:24px;color:#fff;font-weight:bold;font-size:14.9px;line-height:24.5px;transform:scaleX(0.9);transform-origin:0 0">Ready for validation</div>
<div class="cell a" style="left:647px;color:#6f6f6f;font-size:16.7px;">20.08.2025 10:52:15</div>
<div class="cell a" style="left:844px;color:#6f6f6f;font-size:16.7px;">-</div>
<div class="cell a" style="left:992px;color:#6f6f6f;font-size:16.7px;">Invoice</div>
<div class="cell a" style="left:1119px;color:#6f6f6f;font-size:16.7px;">Test Polydocs</div>
<div class="cell a" style="left:1305px;color:#6f6f6f;font-size:16.7px;">-</div>
<div class="cell a" style="left:1486px;color:#6f6f6f;font-size:16.7px;">20.08.2025 10:52:29</div>
<div class="cell a" style="left:1683px;color:#6f6f6f;font-size:16.7px;">-</div>
<div class="cell a" style="left:1861.5px;color:#6f6f6f;font-size:16.7px;">Test Polydocs</div>
<svg class="ic" style="left:2080px;top:11.9px;width:24px;height:24px" viewBox="0 0 24 24"><g fill="#707070"><path stroke="#707070" stroke-width="1.2" stroke-linejoin="round" d="M12.00 0.70 L14.48 2.73 L17.65 2.21 L18.79 5.21 L21.79 6.35 L21.27 9.52 L23.30 12.00 L21.27 14.48 L21.79 17.65 L18.79 18.79 L17.65 21.79 L14.48 21.27 L12.00 23.30 L9.52 21.27 L6.35 21.79 L5.21 18.79 L2.21 17.65 L2.73 14.48 L0.70 12.00 L2.73 9.52 L2.21 6.35 L5.21 5.21 L6.35 2.21 L9.52 2.73Z"/><path d="M6.2 11.4 L11.3 16.4 L19.1 8.4" stroke="#fff" stroke-width="2.6" fill="none" stroke-linecap="round" stroke-linejoin="round"/></g></svg>
<svg class="ic" style="left:2115px;top:21.5px;width:20px;height:5px" viewBox="0 0 20 5"><g fill="#707070"><circle cx="2.5" cy="2.5" r="2.4"/><circle cx="10" cy="2.5" r="2.4"/><circle cx="17.5" cy="2.5" r="2.4"/></g></svg>
<div style="position:absolute;left:0;top:47.2px;width:2185px;height:1.7px;background:#e4e4e4;z-index:1"></div>
</div>
<div style="position:absolute;left:0;top:673.68px;width:2185px;height:48.12px;background:#ffffff">
<div style="position:absolute;left:0;top:0;width:96px;height:100%;background:#f7f7f7"></div>
<div style="position:absolute;left:2021px;top:0;width:164px;height:100%;background:#f7f7f7"></div>
<div class="cb" style="left:17px;top:13.5px"></div>
<div class="cell a" style="left:111.5px;color:#2a8ab2;font-size:16.0px;transform:scaleX(1.0165);transform-origin:0 0">test_google_client_20…</div>
<div class="cell a" style="left:396px;color:#6f6f6f;font-size:16.7px;">1</div>
<div class="a" style="left:456px;top:12px;width:147px;height:24px;background:#f89d35;border-radius:4px"></div><div class="a" style="left:465.5px;top:12px;height:24px;color:#fff;font-weight:bold;font-size:14.9px;line-height:24.5px;transform:scaleX(0.9);transform-origin:0 0">Ready for validation</div>
<div class="cell a" style="left:647px;color:#6f6f6f;font-size:16.7px;">20.08.2025 10:52:13</div>
<div class="cell a" style="left:844px;color:#6f6f6f;font-size:16.7px;">-</div>
<div class="cell a" style="left:992px;color:#6f6f6f;font-size:16.7px;">Invoice</div>
<div class="cell a" style="left:1119px;color:#6f6f6f;font-size:16.7px;">Test Polydocs</div>
<div class="cell a" style="left:1305px;color:#6f6f6f;font-size:16.7px;">-</div>
<div class="cell a" style="left:1486px;color:#6f6f6f;font-size:16.7px;">20.08.2025 10:52:29</div>
<div class="cell a" style="left:1683px;color:#6f6f6f;font-size:16.7px;">-</div>
<div class="cell a" style="left:1861.5px;color:#6f6f6f;font-size:16.7px;">Test Polydocs</div>
<svg class="ic" style="left:2080px;top:11.9px;width:24px;height:24px" viewBox="0 0 24 24"><g fill="#707070"><path stroke="#707070" stroke-width="1.2" stroke-linejoin="round" d="M12.00 0.70 L14.48 2.73 L17.65 2.21 L18.79 5.21 L21.79 6.35 L21.27 9.52 L23.30 12.00 L21.27 14.48 L21.79 17.65 L18.79 18.79 L17.65 21.79 L14.48 21.27 L12.00 23.30 L9.52 21.27 L6.35 21.79 L5.21 18.79 L2.21 17.65 L2.73 14.48 L0.70 12.00 L2.73 9.52 L2.21 6.35 L5.21 5.21 L6.35 2.21 L9.52 2.73Z"/><path d="M6.2 11.4 L11.3 16.4 L19.1 8.4" stroke="#fff" stroke-width="2.6" fill="none" stroke-linecap="round" stroke-linejoin="round"/></g></svg>
<svg class="ic" style="left:2115px;top:21.5px;width:20px;height:5px" viewBox="0 0 20 5"><g fill="#707070"><circle cx="2.5" cy="2.5" r="2.4"/><circle cx="10" cy="2.5" r="2.4"/><circle cx="17.5" cy="2.5" r="2.4"/></g></svg>
<div style="position:absolute;left:0;top:47.2px;width:2185px;height:1.7px;background:#e4e4e4;z-index:1"></div>
</div>
<div style="position:absolute;left:0;top:721.80px;width:2185px;height:48.12px;background:#f8f9fb">
<div style="position:absolute;left:0;top:0;width:96px;height:100%;background:#f7f7f7"></div>
<div style="position:absolute;left:2021px;top:0;width:164px;height:100%;background:#f7f7f7"></div>
<div class="cb" style="left:17px;top:13.5px"></div>
<div class="cell a" style="left:111.5px;color:#2a8ab2;font-size:16.0px;transform:scaleX(1.0489);transform-origin:0 0">test_microsoft_client…</div>
<div class="cell a" style="left:396px;color:#6f6f6f;font-size:16.7px;">1</div>
<div class="a" style="left:456px;top:12px;width:147px;height:24px;background:#f89d35;border-radius:4px"></div><div class="a" style="left:465.5px;top:12px;height:24px;color:#fff;font-weight:bold;font-size:14.9px;line-height:24.5px;transform:scaleX(0.9);transform-origin:0 0">Ready for validation</div>
<div class="cell a" style="left:647px;color:#6f6f6f;font-size:16.7px;">20.08.2025 10:51:53</div>
<div class="cell a" style="left:844px;color:#6f6f6f;font-size:16.7px;">-</div>
<div class="cell a" style="left:992px;color:#6f6f6f;font-size:16.7px;">Invoice</div>
<div class="cell a" style="left:1119px;color:#6f6f6f;font-size:16.7px;">Test Polydocs</div>
<div class="cell a" style="left:1305px;color:#6f6f6f;font-size:16.7px;">-</div>
<div class="cell a" style="left:1486px;color:#6f6f6f;font-size:16.7px;">20.08.2025 10:52:11</div>
<div class="cell a" style="left:1683px;color:#6f6f6f;font-size:16.7px;">-</div>
<div class="cell a" style="left:1861.5px;color:#6f6f6f;font-size:16.7px;">Test Polydocs</div>
<svg class="ic" style="left:2080px;top:11.9px;width:24px;height:24px" viewBox="0 0 24 24"><g fill="#707070"><path stroke="#707070" stroke-width="1.2" stroke-linejoin="round" d="M12.00 0.70 L14.48 2.73 L17.65 2.21 L18.79 5.21 L21.79 6.35 L21.27 9.52 L23.30 12.00 L21.27 14.48 L21.79 17.65 L18.79 18.79 L17.65 21.79 L14.48 21.27 L12.00 23.30 L9.52 21.27 L6.35 21.79 L5.21 18.79 L2.21 17.65 L2.73 14.48 L0.70 12.00 L2.73 9.52 L2.21 6.35 L5.21 5.21 L6.35 2.21 L9.52 2.73Z"/><path d="M6.2 11.4 L11.3 16.4 L19.1 8.4" stroke="#fff" stroke-width="2.6" fill="none" stroke-linecap="round" stroke-linejoin="round"/></g></svg>
<svg class="ic" style="left:2115px;top:21.5px;width:20px;height:5px" viewBox="0 0 20 5"><g fill="#707070"><circle cx="2.5" cy="2.5" r="2.4"/><circle cx="10" cy="2.5" r="2.4"/><circle cx="17.5" cy="2.5" r="2.4"/></g></svg>
</div>
</div>
<div class="a" style="left:2040px;top:1055px;width:1.3px;height:58px;background:#e0e0e0"></div>
<div class="a" style="left:1795px;top:1072px;font-size:16.3px;line-height:24px;color:#6b6b6b">Documents per Page:</div>
<div class="a" style="left:1965px;top:1072px;font-size:16.3px;line-height:24px;color:#222">50</div>
<svg class="ic" style="left:2000px;top:1082px;width:12px;height:6px" viewBox="0 0 12 6"><path fill="#6b6b6b" d="M0 0 H12 L6 6Z"/></svg>
<svg class="ic" style="left:2069px;top:1077px;width:16px;height:15px" viewBox="0 0 16 15"><path d="M1.3 0 V15" stroke="#5aa8c7" stroke-width="2.5"/><path d="M15 1 L8.5 7.5 L15 14" stroke="#5aa8c7" stroke-width="2.5" fill="none"/></svg>
<svg class="ic" style="left:2107.5px;top:1077px;width:10px;height:15px" viewBox="0 0 10 15"><path d="M9 1 L2.5 7.5 L9 14" stroke="#5aa8c7" stroke-width="2.5" fill="none"/></svg>
<div class="a" style="left:2143px;top:1073px;font-size:16.6px;line-height:24px;color:#616161;letter-spacing:0.6px">1 / 5</div>
<svg class="ic" style="left:2203.5px;top:1077px;width:10px;height:15px" viewBox="0 0 10 15"><path d="M1 1 L7.5 7.5 L1 14" stroke="#1a7ea8" stroke-width="2.5" fill="none"/></svg>
<svg class="ic" style="left:2236px;top:1077px;width:16px;height:15px" viewBox="0 0 16 15"><path d="M14.7 0 V15" stroke="#1a7ea8" stroke-width="2.5"/><path d="M1 1 L7.5 7.5 L1 14" stroke="#1a7ea8" stroke-width="2.5" fill="none"/></svg>
<div class="a" style="left:105px;top:1138.5px;width:2165px;height:1.5px;background:#dcdcdc"></div>
<div class="a" style="left:1773px;top:131px;width:248px;height:58px;background:#fff;border-radius:5px;box-shadow:0 2px 3px rgba(0,0,0,0.28),0 0 2px rgba(0,0,0,0.08)"></div>
<div class="btn" style="left:1783px;top:141px;width:38px;height:38px;border-radius:8px"></div>
<div class="btn" style="left:1831px;top:141px;width:38px;height:38px;border-radius:8px"></div>
<div class="btn" style="left:1879px;top:141px;width:38px;height:38px;border-radius:8px"></div>
<div class="btn" style="left:1927.5px;top:141px;width:38px;height:38px;border-radius:8px"></div>
<svg class="ic" style="left:1783px;top:141px;width:38px;height:38px" viewBox="0 0 38 38"><path fill-rule="evenodd" fill="#fff" stroke="#fff" stroke-width="1" stroke-linejoin="round" d="M15.80 11.20 L16.90 8.80 L20.90 8.80 L22.00 11.20 L22.15 11.26 L24.63 10.34 L27.46 13.17 L26.54 15.65 L26.60 15.80 L29.00 16.90 L29.00 20.90 L26.60 22.00 L26.54 22.15 L27.46 24.63 L24.63 27.46 L22.15 26.54 L22.00 26.60 L20.90 29.00 L16.90 29.00 L15.80 26.60 L15.65 26.54 L13.17 27.46 L10.34 24.63 L11.26 22.15 L11.20 22.00 L8.80 20.90 L8.80 16.90 L11.20 15.80 L11.26 15.65 L10.34 13.17 L13.17 10.34 L15.65 11.26Z M22.80 18.90 A3.9 3.9 0 1 0 15.00 18.90 A3.9 3.9 0 1 0 22.80 18.90Z"/></svg>
<svg class="ic" style="left:1841px;top:153px;width:18px;height:13px" viewBox="0 0 18 13"><rect x="0" y="0" width="18" height="13" rx="1.5" fill="#fff"/><g fill="#2389b0"><rect x="2.5" y="2.5" width="1.6" height="1.6"/><rect x="5.5" y="2.5" width="1.6" height="1.6"/><rect x="8.3" y="2.5" width="1.6" height="1.6"/><rect x="11.1" y="2.5" width="1.6" height="1.6"/><rect x="14" y="2.5" width="1.6" height="1.6"/><rect x="2.5" y="5.5" width="1.6" height="1.6"/><rect x="5.5" y="5.5" width="1.6" height="1.6"/><rect x="8.3" y="5.5" width="1.6" height="1.6"/><rect x="11.1" y="5.5" width="1.6" height="1.6"/><rect x="14" y="5.5" width="1.6" height="1.6"/><rect x="5" y="9" width="8" height="1.5"/></g></svg>
<svg class="ic" style="left:1887px;top:148px;width:22px;height:23px" viewBox="0 0 22 23"><path d="M3.5 0.8 H13.3 L18.6 6.1 V22 H3.5Z" stroke="#fff" stroke-width="1.5" fill="none" stroke-linejoin="round"/><path d="M13.3 0.8 V6.1 H18.6Z" fill="#fff"/><rect x="1.6" y="9" width="19.2" height="9" rx="1.8" fill="#fff"/><text x="11.2" y="16.3" font-family="Liberation Sans" font-weight="bold" font-size="7.8" text-anchor="middle" textLength="15" lengthAdjust="spacingAndGlyphs" fill="#2389b0">LOG</text></svg>
<svg class="ic" style="left:1935.5px;top:149px;width:22px;height:22px" viewBox="0 0 22 22"><g fill="#fff"><rect x="0" y="0" width="22" height="5"/><rect x="0" y="7" width="6" height="15"/><rect x="8" y="7" width="6" height="15"/><rect x="16" y="7" width="6" height="15"/></g></svg>
<svg class="ic" style="left:1988.5px;top:155px;width:10px;height:10px" viewBox="0 0 10 10"><path d="M0.5 0.5 L9.5 9.5 M9.5 0.5 L0.5 9.5" stroke="#666" stroke-width="1.5"/></svg>
<svg class="ic" style="left:0;top:0;width:2304px;height:1159px;pointer-events:none" viewBox="0 0 2304 1159"><path fill="#00ffff" d="M1850.4 183.6 L1803 199.6 L1815.5 212.1 L1775.4 252.7 L1781.4 258.3 L1822 219 L1834.5 231.1 Z"/></svg>
</body></html>
